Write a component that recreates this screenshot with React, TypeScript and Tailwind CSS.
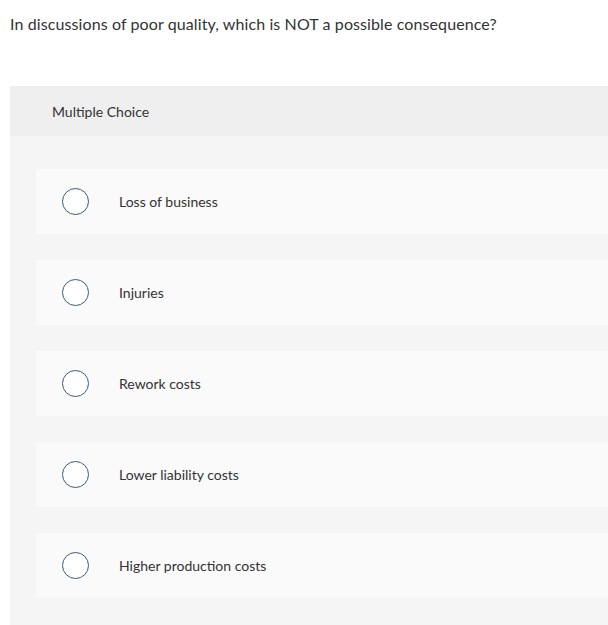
import React from 'react';

const options = [
  'Loss of business',
  'Injuries',
  'Rework costs',
  'Lower liability costs',
  'Higher production costs',
];

export default function App() {
  return (
    <div className="w-[608px] h-[625px] overflow-hidden bg-white text-[#333] font-['Lato',sans-serif]">
      <p className="pl-[10px] pt-[14px] text-[16px] leading-5 tracking-[0.1px]">
        In discussions of poor quality, which is NOT a possible consequence?
      </p>

      <div className="ml-[10px] mt-[52px] w-[620px] bg-[#f5f5f5]">
        {/* header */}
        <div className="h-[50px] bg-[#efefef] flex items-center pl-[42px] text-[14px] text-[#333]">
          Multiple Choice
        </div>

        <div className="flex flex-col gap-[26px] pt-[33px] pb-[40px] pl-[26px]">
          {options.map((opt) => (
            <div key={opt} className="h-[65px] bg-[#fafafa] flex items-center pl-[26px]">
              <span className="w-[27px] h-[27px] rounded-full border border-[#3b5a78] bg-white shrink-0" />
              <span className="ml-[30px] text-[14px] text-[#333]">{opt}</span>
            </div>
          ))}
        </div>
      </div>
    </div>
  );
}
